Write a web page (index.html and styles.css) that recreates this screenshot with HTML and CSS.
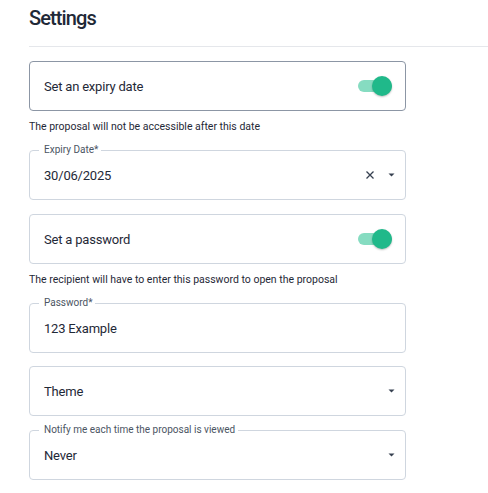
FILE: index.html
```html
<!DOCTYPE html>
<html lang="en">
<head>
<meta charset="utf-8">
<title>Settings</title>
<link rel="stylesheet" href="styles.css">
</head>
<body>
<div class="page">
  <h1 class="title">Settings</h1>
  <div class="divider"></div>
  <div class="form">
    <div class="box box-active">
      <span class="box-text">Set an expiry date</span>
      <span class="switch"><span class="track"></span><span class="thumb"></span></span>
    </div>
    <p class="helper">The proposal will not be accessible after this date</p>
    <div class="box field">
      <span class="label">Expiry Date*</span>
      <span class="box-text">30/06/2025</span>
      <span class="icons">
        <svg class="clear" width="10" height="10" viewBox="0 0 10 10"><path d="M1.5 1.5 L8.5 8.5 M8.5 1.5 L1.5 8.5" stroke="#374151" stroke-width="1.3" fill="none"/></svg>
        <svg class="caret" width="7" height="4" viewBox="0 0 7 4"><path d="M0.5 0.5 H6.5 L3.5 3.5 Z" fill="#374151"/></svg>
      </span>
    </div>
    <div class="box gap">
      <span class="box-text">Set a password</span>
      <span class="switch"><span class="track"></span><span class="thumb"></span></span>
    </div>
    <p class="helper">The recipient will have to enter this password to open the proposal</p>
    <div class="box field">
      <span class="label">Password*</span>
      <span class="box-text">123 Example</span>
    </div>
    <div class="box gap-sm">
      <span class="box-text">Theme</span>
      <span class="icons">
        <svg class="caret" width="7" height="4" viewBox="0 0 7 4"><path d="M0.5 0.5 H6.5 L3.5 3.5 Z" fill="#374151"/></svg>
      </span>
    </div>
    <div class="box field gap">
      <span class="label">Notify me each time the proposal is viewed</span>
      <span class="box-text">Never</span>
      <span class="icons">
        <svg class="caret" width="7" height="4" viewBox="0 0 7 4"><path d="M0.5 0.5 H6.5 L3.5 3.5 Z" fill="#374151"/></svg>
      </span>
    </div>
  </div>
</div>
</body>
</html>
```
FILE: styles.css
```css
* { box-sizing: border-box; }
html, body { margin: 0; padding: 0; background: #ffffff; }
body {
  font-family: Roboto, "Liberation Sans", Arial, sans-serif;
  color: #1f2937;
}
.page {
  padding-left: 29px;
}
.title {
  margin: 0;
  padding-top: 4px;
  font-size: 20px;
  line-height: 28px;
  font-weight: 500;
  letter-spacing: -0.9px;
  color: #1f2937;
}
.divider {
  margin-top: 14px;
  height: 1px;
  background: #e5e7eb;
}
.form {
  display: flex;
  flex-direction: column;
  width: 377px;
  padding-top: 14px;
}
.box {
  position: relative;
  height: 50px;
  border: 1px solid #cfd6df;
  border-radius: 4px;
  display: flex;
  align-items: center;
  padding: 0 13px 0 14px;
}
.box-active { border-color: #8c96a5; }
.gap { margin-top: 14px; }
.gap-sm { margin-top: 13px; }
.box-text {
  flex: 1;
  font-size: 13px;
  letter-spacing: -0.2px;
  color: #1f2937;
}
.helper {
  margin: 8px 0 15px 0;
  font-size: 10.5px;
  line-height: 16px;
  color: #1f2937;
}
.switch {
  position: relative;
  width: 34px;
  height: 20px;
  display: block;
}
.track {
  position: absolute;
  left: 0;
  top: 4px;
  width: 34px;
  height: 12px;
  border-radius: 6px;
  background: #86dcc1;
}
.thumb {
  position: absolute;
  right: 0;
  top: 0;
  width: 20px;
  height: 20px;
  border-radius: 50%;
  background: #20b98a;
  box-shadow: 0 1px 2px rgba(0,0,0,0.25);
}
.label {
  position: absolute;
  left: 9px;
  top: -7px;
  padding: 0 3px 0 5px;
  background: #ffffff;
  font-size: 10px;
  line-height: 12px;
  color: #4b5563;
}
.icons {
  display: flex;
  align-items: center;
  gap: 13px;
  margin-right: -3px;
}
.clear { display: block; }
.caret { display: block; }
```
